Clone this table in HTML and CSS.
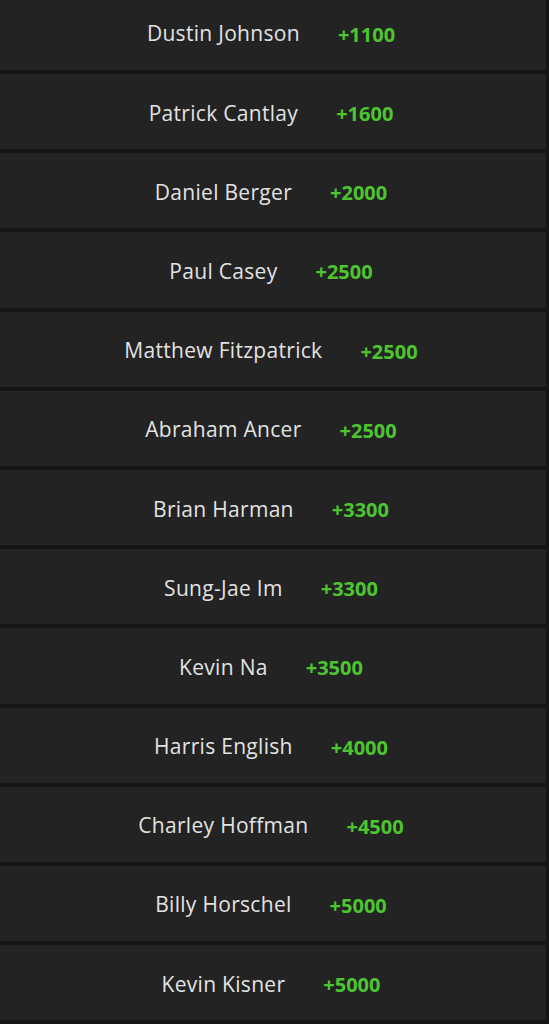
FILE: index.html
```html
<!DOCTYPE html>
<html>
<head>
<meta charset="utf-8">
<link rel="stylesheet" href="styles.css">
</head>
<body>
<div class="list">
  <div class="row"><span class="name">Dustin Johnson</span><span class="odds">+1100</span></div>
  <div class="row"><span class="name">Patrick Cantlay</span><span class="odds">+1600</span></div>
  <div class="row"><span class="name">Daniel Berger</span><span class="odds">+2000</span></div>
  <div class="row"><span class="name">Paul Casey</span><span class="odds">+2500</span></div>
  <div class="row"><span class="name">Matthew Fitzpatrick</span><span class="odds">+2500</span></div>
  <div class="row"><span class="name">Abraham Ancer</span><span class="odds">+2500</span></div>
  <div class="row"><span class="name">Brian Harman</span><span class="odds">+3300</span></div>
  <div class="row"><span class="name">Sung-Jae Im</span><span class="odds">+3300</span></div>
  <div class="row"><span class="name">Kevin Na</span><span class="odds">+3500</span></div>
  <div class="row"><span class="name">Harris English</span><span class="odds">+4000</span></div>
  <div class="row"><span class="name">Charley Hoffman</span><span class="odds">+4500</span></div>
  <div class="row"><span class="name">Billy Horschel</span><span class="odds">+5000</span></div>
  <div class="row"><span class="name">Kevin Kisner</span><span class="odds">+5000</span></div>
</div>
</body>
</html>
```
FILE: styles.css
```css
html, body {
  margin: 0;
  padding: 0;
  background: #151515;
  overflow: hidden;
}
body {
  font-family: "Open Sans", "Noto Sans", sans-serif;
}
.list {
  width: 546px;
  margin-top: -5.2px;
  display: flex;
  flex-direction: column;
  gap: 4px;
}
.row {
  height: 75.2px;
  box-sizing: border-box;
  padding: 2px 4px 0 0;
  background: #232323;
  display: flex;
  align-items: center;
  justify-content: center;
  gap: 38px;
}
.name {
  color: #e2e2e2;
  font-size: 21px;
  letter-spacing: 0.3px;
}
.odds {
  color: #4cc531;
  font-size: 20px;
  font-weight: 700;
  padding-top: 2px;
}
```
